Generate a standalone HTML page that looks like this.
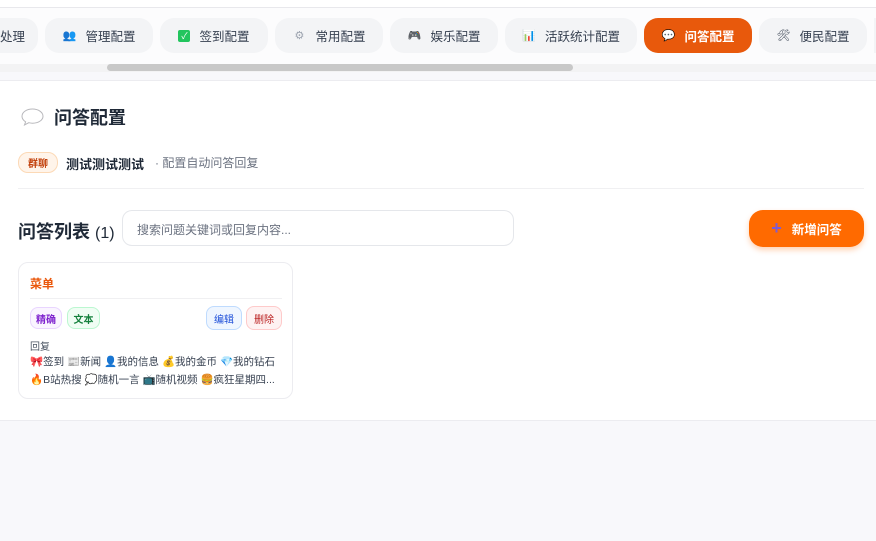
<!DOCTYPE html>
<html><head><meta charset="utf-8"><style>
*{box-sizing:border-box;margin:0;padding:0}
html,body{width:876px;height:541px;overflow:hidden}
body{background:#f8f8fb;font-family:"Liberation Sans","Noto Sans CJK SC",sans-serif;position:relative;color:#1f2937}
.clip{position:absolute;left:0;top:0;width:876px;height:541px;overflow:hidden}
.top{position:absolute;left:0;top:0;width:876px;height:8px;background:#fff;border-bottom:1px solid #e8e8ec}
.tabbar{position:absolute;left:0;top:8px;width:876px;height:64px;background:#fcfcfd}
.tab{position:absolute;top:18px;height:35px;border-radius:14px;background:#f3f4f6;font-size:12.5px;color:#374151;display:flex;align-items:center;justify-content:center;gap:9px}
.tab.on{background:#e8590c;color:#fff;font-weight:bold}
.ic{font-size:11px;width:14px;text-align:center}
.track{position:absolute;left:0;top:64px;width:876px;height:8px;background:#f3f3f4}
.thumb{position:absolute;left:107px;top:64px;width:466px;height:7px;border-radius:4px;background:#c8c8c8}
.main{position:absolute;left:0;top:80px;width:876px;height:341px;background:#fff;border-top:1px solid #ececf0;border-bottom:1px solid #ececf0}
.abs{position:absolute;white-space:nowrap}
.tag{position:absolute;border-radius:8px;font-size:10px;display:flex;align-items:center;justify-content:center;font-weight:bold}
</style></head><body><div class="clip">
<div class="top"></div>
<div class="tabbar"></div>
<div class="tab" style="left:0;width:38px;border-radius:0 14px 14px 0;justify-content:flex-start">处理</div>
<div class="tab" style="left:45px;width:108px"><span class="ic" style="color:#5b2a5e">👥</span>管理配置</div>
<div class="tab" style="left:160px;width:108px"><span style="display:inline-block;width:12px;height:12px;background:#22c55e;border-radius:2px;color:#fff;font-size:9px;line-height:12px;text-align:center">✓</span>签到配置</div>
<div class="tab" style="left:275px;width:108px"><span class="ic" style="color:#9ca3af">⚙</span>常用配置</div>
<div class="tab" style="left:390px;width:108px"><span class="ic">🎮</span>娱乐配置</div>
<div class="tab" style="left:505px;width:132px"><span class="ic">📊</span>活跃统计配置</div>
<div class="tab on" style="left:644px;width:108px"><span class="ic" style="color:#fff">💬</span>问答配置</div>
<div class="tab" style="left:759px;width:108px"><span class="ic">🛠</span>便民配置</div>
<div class="tab" style="left:874px;width:2px;border-radius:0"></div>
<div class="track"></div><div class="thumb"></div>
<div class="main"></div>
<svg class="abs" style="left:20px;top:107px" width="25" height="20" viewBox="0 0 25 20"><path d="M12.5 2C6.5 2 2 5.3 2 9.3c0 2.3 1.4 4.2 3.6 5.5L4.5 18l4.3-2.3c1.2.3 2.4.5 3.7.5 6 0 10.5-3.2 10.5-7S18.5 2 12.5 2z" fill="#fff" stroke="#b8b8bc" stroke-width="1"/></svg>
<div class="abs" style="left:54px;top:104px;font-size:18px;font-weight:bold;color:#1f2937">问答配置</div>
<div class="tag" style="left:18px;top:152px;width:40px;height:21px;background:#fff4ea;border:1px solid #fcd9b6;color:#c2410c;border-radius:10px">群聊</div>
<div class="abs" style="left:66px;top:154px;font-size:13px;font-weight:bold;color:#1f2937">测试测试测试</div>
<div class="abs" style="left:155px;top:154px;font-size:12px;color:#6b7280">· 配置自动问答回复</div>
<div class="abs" style="left:18px;top:188px;width:846px;height:1px;background:#f0f0f2"></div>
<div class="abs" style="left:18px;top:218px;font-size:18px;font-weight:bold;color:#1f2937">问答列表 <span style="font-weight:normal;font-size:16px">(1)</span></div>
<div class="abs" style="left:122px;top:210px;width:392px;height:36px;border:1px solid #e5e7eb;border-radius:10px;background:#fff;font-size:12px;color:#6b7280;padding:10px 14px">搜索问题关键词或回复内容...</div>
<div class="abs" style="left:749px;top:210px;width:115px;height:37px;border-radius:14px;background:#ff6a00;box-shadow:0 3px 6px rgba(255,106,0,.3);color:#fff;font-size:12.5px;font-weight:bold;display:flex;align-items:center;justify-content:center;gap:10px"><span style="color:#7c5cd6;font-size:18px;font-weight:bold">+</span>新增问答</div>
<div class="abs" style="left:18px;top:262px;width:275px;height:137px;border:1px solid #ececf0;border-radius:10px;background:#fff"></div>
<div class="abs" style="left:30px;top:275px;font-size:12px;font-weight:bold;color:#ea580c">菜单</div>
<div class="abs" style="left:30px;top:298px;width:252px;height:1px;background:#f0f0f2"></div>
<div class="tag" style="left:30px;top:307px;width:32px;height:22px;background:#faf5ff;border:1px solid #e9d5ff;color:#7e22ce">精确</div>
<div class="tag" style="left:67px;top:307px;width:33px;height:22px;background:#f0fdf4;border:1px solid #bbf7d0;color:#15803d">文本</div>
<div class="tag" style="left:206px;top:306px;width:36px;height:24px;background:#eff6ff;border:1px solid #bfdbfe;color:#1d4ed8;font-weight:normal">编辑</div>
<div class="tag" style="left:246px;top:306px;width:36px;height:24px;background:#fef2f2;border:1px solid #fecaca;color:#b91c1c;font-weight:normal">删除</div>
<div class="abs" style="left:30px;top:338px;font-size:10px;color:#4b5563">回复</div>
<div class="abs" style="left:30px;top:354px;font-size:10.5px;color:#374151">🎀签到 📰新闻 👤我的信息 💰我的金币 💎我的钻石</div>
<div class="abs" style="left:30px;top:372px;font-size:10.5px;color:#374151">🔥B站热搜 💭随机一言 📺随机视频 🍔疯狂星期四...</div>
</div></body></html>
